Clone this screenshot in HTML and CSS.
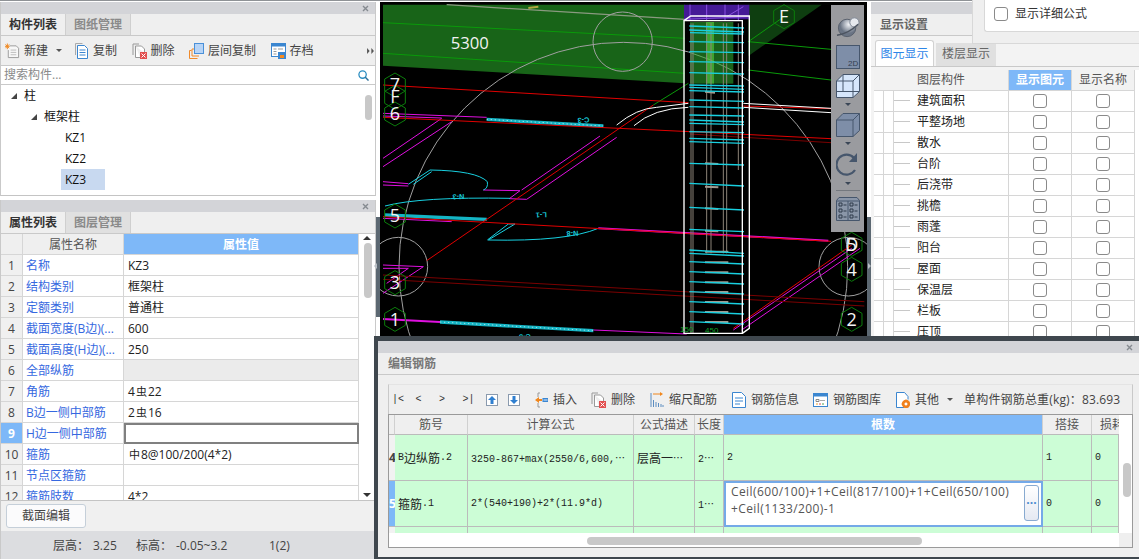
FILE: index.html
```html
<!DOCTYPE html>
<html lang="zh">
<head>
<meta charset="utf-8">
<title>编辑钢筋</title>
<link rel="stylesheet" href="styles.css">
</head>
<body>
<div class="app">
  <div class="topline"></div>
  <div class="main">
    <div class="left">
      <section class="panel list-panel">
        <div class="titlebar"><svg class="close" viewBox="0 0 7 7"><path d="M1 1l5 5M6 1L1 6"/></svg></div>
        <div class="tabs">
          <div class="tab on">构件列表</div>
          <div class="tab">图纸管理</div>
        </div>
        <div class="toolbar">
          <div class="tool tool-new"><svg class="ic" viewBox="0 0 16 16"><path d="M5 2.5h7l2.5 2.5v10h-11V7" fill="#f7f7f7" stroke="#999"/><path d="M6 7h6M6 9.5h6M6 12h6" stroke="#bbb"/><path d="M.5 1l4 4M4.5 1l-4 4M2.5 0v6M0 3h5" stroke="#f0861c"/></svg>新建<span class="caret"></span></div>
          <div class="tool"><svg class="ic" viewBox="0 0 15 16"><path d="M1.5 12V.5h7" fill="none" stroke="#aaa"/><path d="M3.5 2.5h7l3 3v10h-10z" fill="#fff" stroke="#3b86d0"/><path d="M5.500 7h6M5.500 9.500h6M5.500 12h6" stroke="#3b86d0"/></svg>复制</div>
          <div class="tool"><svg class="ic" viewBox="0 0 15 16"><path d="M1 12V1h6" fill="none" stroke="#999"/><path d="M3.500 3h6l3 3v4M8 14.500H3.500V3" fill="#fff" stroke="#999"/><rect x="8" y="9" width="7" height="7" fill="#e25050"/><path d="M9.500 10.500l4 4M13.500 10.500l-4 4" stroke="#fff"/></svg>删除</div>
          <div class="tool"><svg class="ic" viewBox="0 0 15 16"><path d="M.5 15.500v-8h2M.5 15.500h8M3 13v-7h2M3 13h7" fill="none" stroke="#f08a2a"/><rect x="5.500" y=".5" width="9" height="10" fill="#b7d4f6" stroke="#4a90d8"/></svg>层间复制</div>
          <div class="tool"><svg class="ic" viewBox="0 0 15 16"><rect x=".5" y=".5" width="14" height="13" fill="#fff" stroke="#3b86d0"/><rect x=".5" y=".5" width="14" height="3" fill="#3b86d0"/><path d="M2.500 6h3M2.500 8.500h3M2.500 11h3M7 6h5" stroke="#999"/><rect x="7" y="9" width="8" height="7" fill="#3b86d0"/><rect x="9" y="12" width="4" height="3" fill="#f58a1f"/></svg>存档</div>
          <svg class="more" viewBox="0 0 8 7"><path d="M0 0l3 3.500L0 7zM5 0l3 3.500L5 7z"/></svg>
        </div>
        <div class="search">
          <span class="placeholder">搜索构件...</span>
          <svg class="search-ic" viewBox="0 0 12 12"><circle cx="5" cy="5" r="4" fill="none" stroke="#2a8cc0" stroke-width="1.400"/><path d="M8 8l3.500 3.500" stroke="#2a6f9a" stroke-width="1.600"/></svg>
        </div>
        <div class="tree">
          <div class="node lv1"><i class="tri"></i>柱</div>
          <div class="node lv2"><i class="tri"></i>框架柱</div>
          <div class="node lv3"><span>KZ1</span></div>
          <div class="node lv3"><span>KZ2</span></div>
          <div class="node lv3"><span class="sel">KZ3</span></div>
          <div class="thumb tree-thumb"></div>
        </div>
      </section>
      <section class="panel prop-panel">
        <div class="titlebar"><svg class="close" viewBox="0 0 7 7"><path d="M1 1l5 5M6 1L1 6"/></svg></div>
        <div class="tabs">
          <div class="tab on">属性列表</div>
          <div class="tab">图层管理</div>
        </div>
        <div class="prop-wrap">
          <div class="props">
            <div class="prow head"><div class="pi"></div><div class="pn">属性名称</div><div class="pv">属性值</div></div>
            <div class="prow"><div class="pi">1</div><div class="pn">名称</div><div class="pv">KZ3</div></div>
            <div class="prow"><div class="pi">2</div><div class="pn">结构类别</div><div class="pv">框架柱</div></div>
            <div class="prow"><div class="pi">3</div><div class="pn">定额类别</div><div class="pv">普通柱</div></div>
            <div class="prow"><div class="pi">4</div><div class="pn">截面宽度(B边)(...</div><div class="pv">600</div></div>
            <div class="prow"><div class="pi">5</div><div class="pn">截面高度(H边)(...</div><div class="pv">250</div></div>
            <div class="prow"><div class="pi">6</div><div class="pn">全部纵筋</div><div class="pv grey"></div></div>
            <div class="prow"><div class="pi">7</div><div class="pn">角筋</div><div class="pv">4<span class="rb">虫</span>22</div></div>
            <div class="prow"><div class="pi">8</div><div class="pn">B边一侧中部筋</div><div class="pv">2<span class="rb">虫</span>16</div></div>
            <div class="prow"><div class="pi cur">9</div><div class="pn">H边一侧中部筋</div><div class="pv edit"></div></div>
            <div class="prow"><div class="pi">10</div><div class="pn">箍筋</div><div class="pv"><span class="rb">中</span>8@100/200(4*2)</div></div>
            <div class="prow"><div class="pi">11</div><div class="pn">节点区箍筋</div><div class="pv"></div></div>
            <div class="prow"><div class="pi">12</div><div class="pn">箍筋肢数</div><div class="pv">4*2</div></div>
          </div>
          <div class="vscroll">
            <i class="arrow up"></i>
            <div class="thumb prop-thumb"></div>
            <i class="arrow down"></i>
          </div>
        </div>
        <div class="btn-area"><button class="btn">截面编辑</button></div>
        <div class="status">
          <span class="s1">层高：</span><span class="s2">3.25</span><span class="s3">标高：</span><span class="s4">-0.05~3.2</span><span class="s5">1(2)</span>
        </div>
      </section>
    </div>
    <div class="split"><div class="grip"><i class="grip-l"></i></div></div>
    <div class="canvas">
      <svg class="scene" viewBox="0 6 1461 1002" preserveAspectRatio="xMinYMin slice">
        <defs>
          <polygon id="hx" points="0,-36 31,-18 31,18 0,36 -31,18 -31,-18" fill="none" stroke="#0c7d0c" stroke-width="3"/>
        </defs>
        <rect x="0" y="0" width="1470" height="1020" fill="#000"/>
        <polygon points="9,14 915,14 915,250 9,197" fill="#186418"/>
        <polygon points="1105,14 1325,14 1105,168" fill="#0e3e10"/>
        <g fill="none" stroke="#0a9a0a" stroke-width="3">
          <path d="M9 68L915 115M9 160L915 220M1105 125L1353 148M1105 210L1353 240M1105 125L1212 50M820 315L925 250"/>
        </g>
        <path d="M200 14L915 58" stroke="#8a9a80" stroke-width="4"/>
        <path d="M445 24L475 20" stroke="#b0a840" stroke-width="6"/>
        <g fill="none" stroke="#a0a0a0" stroke-width="3">
          <circle cx="728" cy="125" r="89"/>
          <circle cx="730" cy="800" r="673"/>
          <circle cx="55" cy="800" r="88"/>
          <circle cx="1405" cy="800" r="88"/>
        </g>
        <g fill="none" stroke="#e010e0" stroke-width="3">
          <path d="M9 340L320 352M9 348L185 354M9 475L185 355M9 500L215 365M425 570L660 408M440 598L710 412M9 545L85 551M9 555L85 558M310 570L420 572L388 596L440 598M9 795L130 800L9 880M9 805L85 805L20 850M9 655L215 665M640 990L920 1002M1060 990L1415 745M1085 990L1440 745"/>
          <path d="M655 685L1345 722M9 957L180 966" stroke-width="6"/>
        </g>
        <g fill="none" stroke="#18d0e0" stroke-width="3">
          <path d="M85 553L150 510Q290 512 322 545Q325 565 310 570M100 553L155 515M15 618Q120 590 390 595M325 720L405 672L385 672L322 720M325 720Q560 725 655 685"/>
          <path d="M320 358L670 378M15 645L320 658M180 966L640 992" stroke="#14b4c4" stroke-width="10"/>
          <path d="M320 358L670 378M180 966L640 992" stroke="#e6f8fa" stroke-width="2" stroke-dasharray="4 8"/>
        </g>
        <g fill="none" stroke="#e00000" stroke-width="3">
          <path d="M9 255L925 308M140 782L820 315M9 352L930 395L1353 416M9 650L1353 724M1090 318L1353 326M1060 985L1415 735"/>
        </g>
        <g fill="none" stroke="#7a0000" stroke-width="3">
          <path d="M9 825L1453 905M9 838L1453 918M930 402L1353 428"/>
        </g>
        <g fill="none" stroke="#fff" stroke-width="3">
          <path d="M710 375Q770 325 830 322L925 310M762 377Q820 325 925 322M1090 310L1353 325M1090 322L1353 338"/>
        </g>
        <polygon points="912,14 1108,14 1108,58 912,60" fill="#451a96"/>
        <g fill="none" stroke="#8a50e0" stroke-width="3"><path d="M930 14V60M980 14V60M1035 14V60M1075 14V60M912 58L1108 50M1040 50L1090 20"/></g>
        <rect x="930" y="66" width="130" height="185" fill="#2fb030" opacity=".55"/>
        <rect x="978" y="66" width="24" height="185" fill="#58d040" opacity=".6"/>
        <g fill="none" stroke="#8c8478" stroke-width="3">
          <path d="M933 70V1000M939 70V1000M980 70V760M993 70V760M1030 70V760M1040 70V760M1075 70V510"/>
        </g>
        <g fill="none" stroke="#a09a90" stroke-width="6">
          <path d="M975 275L1005 278M975 490L1015 492M975 560L1015 562M975 625L1015 627M975 692L1015 694M975 755L1045 755M975 787L1045 787M975 817L1045 817M975 847L1045 847M975 876L1045 876M975 906L1045 906M975 936L1045 936M975 966L1045 966"/>
        </g>
        <g fill="none" stroke="#18d0e0" stroke-width="4">
          <path d="M928 78L1092 84M930 98L1090 102M928 125L1092 128M928 155L1092 158M928 185L1092 188M928 218L1092 222M928 255L1092 258M928 272L1092 276M928 300L1092 304M928 320L1092 324M928 345L1092 348M928 370L1092 374M928 395L1092 398M928 425L1092 430M928 490L1092 495M928 550L1092 558M928 622L1092 630M928 688L1092 695M928 750L1092 760M928 785L1092 792M928 815L1092 822M928 845L1092 852M928 875L1092 882M928 905L1092 912M928 935L1092 942M928 965L1092 972"/>
          <path d="M928 90L1092 96M928 262L1092 268M928 360L1092 366M928 415L1092 420M928 760L1092 768"/>
        </g>
        <g fill="none" stroke="#fff" stroke-width="4">
          <path d="M912 62H1087V1000H912ZM912 62L932 48H1108V985L1087 1000"/>
        </g>
        <g class="cad-note">
          <text transform="translate(628 352) rotate(177)">C-3</text>
          <text transform="translate(253 582) rotate(178)">N-3</text>
          <text transform="translate(500 637) rotate(178)">L-1</text>
          <text transform="translate(595 692) rotate(178)">N-8</text>
          <text transform="translate(452 1002) rotate(178)">C-3</text>
        </g>
        <text class="cad-green" x="900" y="996">150</text>
        <text class="cad-green" x="975" y="1000">450</text>
        <use href="#hx" x="1212" y="50"/>
        <use href="#hx" x="45" y="255"/>
        <use href="#hx" x="45" y="292"/>
        <use href="#hx" x="45" y="342"/>
        <use href="#hx" x="45" y="648"/>
        <use href="#hx" x="45" y="848"/>
        <use href="#hx" x="45" y="958"/>
        <use href="#hx" x="1415" y="733"/>
        <use href="#hx" x="1415" y="808"/>
        <use href="#hx" x="1415" y="958"/>
        <g class="cad-label">
          <text x="1212" y="69">E</text>
          <text x="45" y="272">7</text>
          <text x="45" y="309">F</text>
          <text x="45" y="359">6</text>
          <text x="45" y="667">5</text>
          <text x="45" y="867">3</text>
          <text x="45" y="977">1</text>
          <text x="1415" y="752">D</text>
          <text x="1415" y="752">5</text>
          <text x="1415" y="827">4</text>
          <text x="1415" y="977">2</text>
        </g>
        <text class="cad-big" x="212" y="148">5300</text>
      </svg>
      <div class="viewbar">
        <svg class="vb-sphere" viewBox="0 0 26 24"><defs><radialGradient id="sp" cx=".6" cy=".3"><stop offset="0" stop-color="#f2f4f8"/><stop offset="1" stop-color="#6a7484"/></radialGradient></defs><circle cx="12" cy="13" r="9.500" fill="url(#sp)" stroke="#555d6a"/><circle cx="20" cy="7" r="5" fill="#e6e9ee" stroke="#7a8290"/><path d="M1 21Q14 19 24 9" fill="none" stroke="#4c5460" stroke-width="1.500"/></svg>
        <svg class="vb-ic" viewBox="0 0 24 24"><rect x=".5" y=".5" width="23" height="23" fill="#7e8ea8" stroke="#46566c"/><text class="vb-2d" x="12" y="21">2D</text></svg>
        <svg class="vb-ic vb-next" viewBox="0 0 24 24"><path d="M.5 7L7 .5h16.500v17L17 23.500H.5z" fill="#d6e6fb" stroke="#46566c"/><path d="M.5 7H17v16.500M17 7l6.500-6.500M7 .5v17H.5M7 17.500h16.500" fill="none" stroke="#46566c"/></svg>
        <i class="vb-caret"></i>
        <svg class="vb-ic" viewBox="0 0 24 24"><path d="M.5 7L7 .5h16.500v17L17 23.500H.5z" fill="#7e8ea8" stroke="#46566c"/><path d="M.5 7H17v16.500M17 7l6.500-6.500" fill="none" stroke="#46566c"/></svg>
        <i class="vb-caret vb-caret-b"></i>
        <svg class="vb-ic" viewBox="0 0 24 24"><path d="M19 17A10 10 0 1 1 18 5" fill="none" stroke="#46566c" stroke-width="2.200"/><path d="M21 0v9h-8z" fill="#46566c"/></svg>
        <i class="vb-caret vb-caret-c"></i>
        <div class="vb-sep"></div>
        <svg class="vb-ic" viewBox="0 0 24 24"><path d="M3 .5h18l2.500 3v20H.5v-20z" fill="#8a96a8" stroke="#46566c"/><path d="M.5 4h23M12 4v19.500" stroke="#46566c"/><path d="M3 6h3v3H3zM3 12h3v3H3zM3 18h3v3H3zM14 6h3v3h-3zM14 12h3v3h-3zM14 18h3v3h-3z" fill="none" stroke="#2e3a4a"/><path d="M7.500 8h3M7.500 14h3M7.500 20h3M18.500 8h3M18.500 14h3M18.500 20h3" stroke="#2e3a4a"/></svg>
      </div>
    </div>
    <div class="split split-r"><div class="grip"><i class="grip-r"></i></div></div>
    <section class="right">
      <div class="titlebar"></div>
      <div class="r-head">显示设置</div>
      <div class="r-tabs">
        <div class="r-tab on">图元显示</div>
        <div class="r-tab">楼层显示</div>
      </div>
      <div class="layers">
        <div class="lrow lhead"><div class="lc1 lcenter">图层构件</div><div class="lc2 lblue">显示图元</div><div class="lc2">显示名称</div></div>
        <div class="lrow"><div class="lc1"><i class="g1"></i><i class="g2"></i><i class="dash"></i>建筑面积</div><div class="lc2"><i class="chk"></i></div><div class="lc2"><i class="chk"></i></div></div>
        <div class="lrow"><div class="lc1"><i class="g1"></i><i class="g2"></i><i class="dash"></i>平整场地</div><div class="lc2"><i class="chk"></i></div><div class="lc2"><i class="chk"></i></div></div>
        <div class="lrow"><div class="lc1"><i class="g1"></i><i class="g2"></i><i class="dash"></i>散水</div><div class="lc2"><i class="chk"></i></div><div class="lc2"><i class="chk"></i></div></div>
        <div class="lrow"><div class="lc1"><i class="g1"></i><i class="g2"></i><i class="dash"></i>台阶</div><div class="lc2"><i class="chk"></i></div><div class="lc2"><i class="chk"></i></div></div>
        <div class="lrow"><div class="lc1"><i class="g1"></i><i class="g2"></i><i class="dash"></i>后浇带</div><div class="lc2"><i class="chk"></i></div><div class="lc2"><i class="chk"></i></div></div>
        <div class="lrow"><div class="lc1"><i class="g1"></i><i class="g2"></i><i class="dash"></i>挑檐</div><div class="lc2"><i class="chk"></i></div><div class="lc2"><i class="chk"></i></div></div>
        <div class="lrow"><div class="lc1"><i class="g1"></i><i class="g2"></i><i class="dash"></i>雨蓬</div><div class="lc2"><i class="chk"></i></div><div class="lc2"><i class="chk"></i></div></div>
        <div class="lrow"><div class="lc1"><i class="g1"></i><i class="g2"></i><i class="dash"></i>阳台</div><div class="lc2"><i class="chk"></i></div><div class="lc2"><i class="chk"></i></div></div>
        <div class="lrow"><div class="lc1"><i class="g1"></i><i class="g2"></i><i class="dash"></i>屋面</div><div class="lc2"><i class="chk"></i></div><div class="lc2"><i class="chk"></i></div></div>
        <div class="lrow"><div class="lc1"><i class="g1"></i><i class="g2"></i><i class="dash"></i>保温层</div><div class="lc2"><i class="chk"></i></div><div class="lc2"><i class="chk"></i></div></div>
        <div class="lrow"><div class="lc1"><i class="g1"></i><i class="g2"></i><i class="dash"></i>栏板</div><div class="lc2"><i class="chk"></i></div><div class="lc2"><i class="chk"></i></div></div>
        <div class="lrow"><div class="lc1"><i class="g1"></i><i class="g2"></i><i class="dash"></i>压顶</div><div class="lc2"><i class="chk"></i></div><div class="lc2"><i class="chk"></i></div></div>
      </div>
    </section>
  </div>

  <div class="popup">
    <div class="popup-inner"><i class="chk"></i><span>显示详细公式</span></div>
  </div>

  <section class="rebar-win">
    <div class="titlebar"><svg class="close" viewBox="0 0 7 7"><path d="M1 1l5 5M6 1L1 6"/></svg></div>
    <div class="win-head">编辑钢筋</div>
    <div class="win-body">
      <div class="win-tools">
        <div class="nav"><span>|&lt;</span><span>&lt;</span><span>&gt;</span><span>&gt;|</span></div>
        <svg class="mv" viewBox="0 0 12 12"><rect width="12" height="12" fill="#8a9aae"/><rect x="1" y="1" width="10" height="10" fill="#fff"/><path d="M6 2l4 4H7.500v4h-3V6H2z" fill="#2f7fd0"/></svg>
        <svg class="mv mv2" viewBox="0 0 12 12"><rect width="12" height="12" fill="#8a9aae"/><rect x="1" y="1" width="10" height="10" fill="#fff"/><path d="M6 10L2 6h2.500V2h3v4H10z" fill="#2f7fd0"/></svg>
        <div class="tool m14 first"><svg class="ic13" viewBox="0 0 13 16"><path d="M5 1h-2v4M3 11v4h2" fill="none" stroke="#999"/><path d="M0 8l4-3v2h3v2H4v2z" fill="#f0861c"/><rect x="8" y="6.500" width="5" height="3" fill="#8ab8e8" stroke="#3b86d0"/></svg>插入</div>
        <div class="tool"><svg class="ic15" viewBox="0 0 15 16"><path d="M1 12V1h6" fill="none" stroke="#999"/><path d="M3.500 3h6l3 3v4M8 14.500H3.500V3" fill="#fff" stroke="#999"/><rect x="8" y="9" width="7" height="7" fill="#e25050"/><path d="M9.500 10.500l4 4M13.500 10.500l-4 4" stroke="#fff"/></svg>删除</div>
        <div class="tool"><svg class="ic14" viewBox="0 0 14 16"><path d="M1 1v14M3.500 8v7M6 10v5M8.500 11v4M11 12v3M13 13v2" stroke="#5a8cc0"/><path d="M3 2h8" stroke="#f0861c"/><path d="M10 0l3 2-3 2z" fill="#f0861c"/></svg>缩尺配筋</div>
        <div class="tool m14"><svg class="ic14" viewBox="0 0 14 16"><path d="M.5.5h9l4 4v11H.5z" fill="#fff" stroke="#3b86d0"/><path d="M3 6h8M3 9h8M3 12h5" stroke="#3b86d0"/></svg>钢筋信息</div>
        <div class="tool"><svg class="ic15" viewBox="0 0 15 14"><rect x=".5" y=".5" width="14" height="13" fill="#fff" stroke="#3b86d0"/><rect x=".5" y=".5" width="14" height="3" fill="#3b86d0"/><path d="M3 6.500h3v2H3z" fill="none" stroke="#888"/><path d="M3 11h2" stroke="#f0a030"/><path d="M6 11h2" stroke="#e05050"/><path d="M9 11h2" stroke="#50a050"/><path d="M7 7.500h5" stroke="#aaa"/></svg>钢筋图库</div>
        <div class="tool"><svg class="ic14" viewBox="0 0 14 16"><path d="M8 15.500H.5V.5h8l3.500 4v3" fill="#fff" stroke="#3b86d0"/><circle cx="10" cy="12" r="3" fill="none" stroke="#f0801c" stroke-width="2.400"/><path d="M10 7.500v9M5.500 12h9M7 9l6 6M13 9l-6 6" stroke="#f0801c"/><circle cx="10" cy="12" r="1.200" fill="#fff"/></svg>其他<span class="caret"></span></div>
        <div class="total">单构件钢筋总重(kg)：83.693</div>
      </div>
      <div class="rb-frame">
        <div class="rb-main">
          <div class="rb-clip">
            <div class="rrow rhead"><div class="rc"></div><div class="rc">筋号</div><div class="rc">计算公式</div><div class="rc">公式描述</div><div class="rc">长度</div><div class="rc act">根数</div><div class="rc">搭接</div><div class="rc clip-name">损耗</div></div>
            <div class="rrow rbody"><div class="rc ridx">4</div><div class="rc mono">B<span class="cj">边纵筋</span>.2</div><div class="rc mono">3250-867+max(2550/6,600,⋯</div><div class="rc mono"><span class="cj">层高一</span>⋯</div><div class="rc mono">2⋯</div><div class="rc mono">2</div><div class="rc mono">1</div><div class="rc mono">0</div></div>
            <div class="rrow rbody"><div class="rc ridx cur">5</div><div class="rc mono"><span class="cj">箍筋</span>.1</div><div class="rc mono">2*(540+190)+2*(11.9*d)</div><div class="rc mono"></div><div class="rc mono">1⋯</div><div class="rc cell-edit"><div class="formula">Ceil(600/100)+1+Ceil(817/100)+1+Ceil(650/100)<br>+Ceil(1133/200)-1</div><button class="dots">···</button></div><div class="rc mono">0</div><div class="rc mono">0</div></div>
            <div class="rrow rbody"><div class="rc ridx"></div><div class="rc"></div><div class="rc"></div><div class="rc"></div><div class="rc"></div><div class="rc"></div><div class="rc"></div><div class="rc"></div></div>
          </div>
          <div class="hscroll"><div class="thumb h-thumb"></div></div>
        </div>
        <div class="rb-side">
          <div class="thumb v-thumb"></div>
          <div class="corner"></div>
        </div>
      </div>
    </div>
  </section>
</div>
</body>
</html>
```

FILE: styles.css
```css
* { box-sizing: border-box; }
html, body { margin: 0; padding: 0; }
body {
  width: 1139px;
  height: 559px;
  overflow: hidden;
  font: 12px/1 "Open Sans", "Noto Sans CJK SC", sans-serif;
  color: #222;
  background: #fff;
}
i { display: block; font-style: normal; }
button { font: inherit; padding: 0; cursor: default; }

.app { position: relative; width: 1139px; height: 559px; overflow: hidden; }
.topline { height: 2px; background: #fff; border-top: 1px solid #8f9296; }
.main { display: flex; height: 557px; }

/* shared */
.titlebar { position: relative; height: 12px; background: #d3d4d8; flex: none; }
.close { position: absolute; right: 6px; top: 3px; width: 7px; height: 7px; }
.close path { stroke: #858a90; stroke-width: 1.400; fill: none; }
.thumb { background: #c8c8c8; border-radius: 4px; }

/* left column */
.left { width: 376px; flex: none; display: flex; flex-direction: column; gap: 4px; }
.panel { display: flex; flex-direction: column; background: #fff; border-left: 1px solid #c9c9c9; border-right: 1px solid #c9c9c9; }
.list-panel { height: 194px; border-bottom: 1px solid #c4c4c4; }
.prop-panel { height: 359px; }
.tabs { display: flex; height: 22px; flex: none; background: #efefef; border-bottom: 1px solid #c9c9c9; }
.tab { width: 65px; line-height: 21px; text-align: center; font-weight: 700; color: #8a8a8a; background: #e0e0e0; border-right: 1px solid #cfcfcf; }
.tab.on { color: #333; background: #efefef; }

.toolbar { display: flex; align-items: center; height: 30px; padding-left: 4px; flex: none; background: #efefef; border-bottom: 1px solid #c9c9c9; color: #444; }
.tool { display: flex; align-items: center; margin-right: 15px; color: #444; }
.toolbar .tool { margin-right: 14.500px; }
.toolbar .tool-new { margin-right: 12px; }
.ic { width: 15px; height: 16px; margin-right: 4px; flex: none; }
.ic13 { width: 13px; height: 16px; margin-right: 5px; flex: none; }
.ic14 { width: 14px; height: 16px; margin-right: 5px; flex: none; }
.ic15 { width: 15px; height: 16px; margin-right: 5px; flex: none; }
.caret { width: 0; height: 0; margin-left: 8px; border: 3px solid transparent; border-top: 3px solid #555; border-bottom: 0; }
.more { width: 7px; height: 6px; margin-left: auto; margin-right: 1px; }
.more path { fill: #555; }

.search { display: flex; align-items: center; justify-content: space-between; height: 19px; flex: none; padding: 0 6px 0 3px; border-bottom: 1px solid #c9c9c9; }
.placeholder { color: #8a8a8a; }
.search-ic { width: 11px; height: 11px; }

.tree { position: relative; flex: 1; overflow: hidden; }
.node { display: flex; align-items: center; height: 21px; color: #111; }
.lv1 { padding-left: 10px; }
.lv2 { padding-left: 30px; }
.lv3 { padding-left: 60px; }
.lv3 span { display: block; padding: 0 4px; line-height: 21px; }
.lv3 .sel { width: 44px; background: #c8d9f0; }
.tri { width: 0; height: 0; margin-right: 7px; border-style: solid; border-width: 0 0 6px 6px; border-color: transparent transparent #444 transparent; }
.tree-thumb { position: absolute; right: 3px; top: 10px; width: 7px; height: 25px; }

.prop-wrap { display: flex; height: 267px; flex: none; border-bottom: 1px solid #c4c4c4; }
.props { width: 358px; height: 266px; overflow: hidden; flex: none; }
.prow { display: grid; grid-template-columns: 22px 101px 235px; height: 21px; }
.prow > div { display: flex; align-items: center; padding-top: 2px; border-right: 1px solid #d6d6d6; border-bottom: 1px solid #d6d6d6; white-space: nowrap; overflow: hidden; }
.pi { justify-content: center; background: #f0f0f0; color: #444; font-size: 12px; }
.pn { padding-left: 3px; color: #3568e0; }
.pv { padding-left: 4px; color: #222; }
.pv.grey { background: #ebebeb; }
.pv.edit { border: 2px solid #808080 !important; }
.pi.cur { background: #7db8f8; color: #fff; font-weight: 700; }
.rb { font-size: 11px; margin: 0 1px; position: relative; top: -1px; }
.head .pi { background: #efefef; }
.head .pn { justify-content: center; padding-left: 0; background: #efefef; color: #555; }
.head .pv { justify-content: center; padding-left: 0; background: #7eb8f8; color: #fff; font-weight: 700; }
.vscroll { position: relative; flex: 1; }
.arrow { position: absolute; left: 4px; width: 0; height: 0; border: 4px solid transparent; }
.arrow.up { top: 2px; border-top: 0; border-bottom: 4px solid #333; }
.arrow.down { bottom: 3px; border-bottom: 0; border-top: 4px solid #333; }
.prop-thumb { position: absolute; left: 5px; top: 9px; width: 8px; height: 55px; }

.btn-area { height: 30px; flex: none; padding: 3px 5px; background: #f0f0f0; }
.btn { width: 80px; height: 24px; background: #fbfbfc; border: 1px solid #c5cfd9; border-radius: 3px; color: #444; }
.status { display: flex; align-items: center; height: 29px; flex: none; background: #dcdde0; color: #444; }
.status .s1 { margin-left: 52px; width: 40px; }
.status .s2 { width: 43px; }
.status .s3 { width: 40px; }
.status .s4 { width: 93px; }

/* splitters */
.split { width: 4px; flex: none; position: relative; background: #fff; }
.grip { position: absolute; left: 0; right: 0; top: 215px; height: 100px; background: #5c6872; }
.split-r .grip { height: 120px; }
.grip-l, .grip-r { position: absolute; top: 46px; width: 0; height: 0; border: 3px solid transparent; }
.grip-l { left: -2px; border-right: 3px solid #b8bec4; border-left: 0; }
.grip-r { left: 1px; border-left: 3px solid #b8bec4; border-right: 0; }

/* canvas */
.canvas { position: relative; width: 487px; flex: none; background: #000; overflow: hidden; }
.scene { display: block; width: 487px; height: 334px; }
.cad-note text { font: 700 22px "Liberation Sans", sans-serif; fill: #18c8d8; }
.cad-green { font: 24px "Liberation Sans", sans-serif; fill: #0fa02a; }
.cad-label text { font: 54px "Open Sans", sans-serif; fill: #f4f4f4; text-anchor: middle; }
.cad-big { font: 50px "Open Sans", sans-serif; fill: #f2f2f2; }

.viewbar { position: absolute; left: 451px; top: 3px; width: 33px; height: 227px; display: flex; flex-direction: column; align-items: center; padding-top: 11px; background: #9a9b9f; }
.vb-sphere { width: 26px; height: 22px; margin-bottom: 7px; flex: none; }
.vb-ic { width: 24px; height: 24px; flex: none; }
.vb-next { margin-top: 5px; }
.vb-2d { font: 8px "Liberation Sans", sans-serif; fill: #33404f; }
.vb-caret { width: 0; height: 0; margin: 5px 0 7px; border: 3px solid transparent; border-top: 3px solid #3a4656; border-bottom: 0; flex: none; }
.vb-caret-b { margin-bottom: 8px; }
.vb-caret-c { margin-bottom: 5px; }
.vb-sep { width: 24px; height: 1px; margin-bottom: 6px; background: #74787e; flex: none; }

/* right */
.right { flex: 1; min-width: 0; height: 557px; overflow: hidden; background: #fff; }
.r-head { height: 22px; padding-left: 9px; line-height: 21px; font-weight: 700; color: #666; background: #efefef; border-bottom: 1px solid #c9c9c9; }
.r-tabs { display: flex; align-items: flex-end; height: 31px; padding-left: 4px; gap: 2px; background: #f3f3f3; border-bottom: 1px solid #c9c9c9; }
.r-tab { height: 23px; width: 60px; line-height: 22px; text-align: center; color: #666; background: #e0e0e0; }
.r-tab.on { width: 59px; height: 26px; line-height: 25px; color: #2d86e8; background: #fff; border: 1px solid #d2d2d2; border-bottom: 0; border-radius: 3px 3px 0 0; }
.layers { padding: 3px 0 0 3px; background: #f3f3f3; }
.lrow { display: grid; grid-template-columns: 135px 63px 63px; height: 21px; background: #fff; }
.lrow > div { display: flex; align-items: center; justify-content: center; border-right: 1px solid #d6d6d6; border-bottom: 1px solid #d6d6d6; color: #222; }
.lrow > .lc1 { justify-content: flex-start; align-items: stretch; line-height: 20px; }
.lhead > div { background: #f2f2f2; color: #555; }
.lrow > .lcenter { justify-content: center; }
.lrow > .lblue { background: #7eb8f8; color: #fff; font-weight: 700; }
.g1 { width: 10px; border-right: 1px solid #d6d6d6; }
.g2 { width: 10px; border-right: 1px solid #d6d6d6; }
.dash { width: 16px; height: 1px; margin: 9px 7px 0 0; background: #c8c8c8; }
.chk { width: 14px; height: 14px; background: #fff; border: 1px solid #8a8a8a; border-radius: 3px; }

/* popup */
.popup { position: absolute; left: 972px; top: 0; width: 167px; height: 44px; padding-left: 11px; background: #efefef; border: 1px solid #d8d8d8; border-top: 0; border-right: 0; }
.popup-inner { display: flex; align-items: center; gap: 7px; height: 32px; padding: 0 0 4px 9px; background: #fff; border: 1px solid #d8d8d8; border-top: 0; border-right: 0; border-radius: 0 0 0 3px; color: #333; }

/* rebar window */
.rebar-win { position: absolute; left: 374px; top: 336px; width: 765px; height: 223px; display: flex; flex-direction: column; background: #efefef; border-top: 5px solid #3f474e; border-left: 4px solid #3f474e; border-bottom: 2px solid #3f474e; }
.win-head { height: 22px; padding-left: 10px; line-height: 21px; flex: none; font-weight: 700; color: #777; background: #efefef; border-bottom: 1px solid #c9c9c9; }
.win-body { flex: 1; padding: 9px 6px 10px 10px; }
.win-tools { display: flex; align-items: center; height: 30px; border-left: 1px solid #c9c9c9; border-right: 1px solid #c9c9c9; border-top: 1px solid #e4e4e4; }
.nav { display: flex; width: 97px; padding-left: 3px; font: 10px "Liberation Mono", monospace; color: #333; }
.nav span { width: 24px; }
.mv { width: 12px; height: 12px; flex: none; }
.mv2 { margin-left: 10px; margin-right: 15px; }
.first { margin-left: 0; }
.m14 { margin-right: 14px; }
.total { margin-left: -4px; letter-spacing: .16px; color: #444; white-space: nowrap; }

.rb-frame { display: flex; height: 134px; background: #fff; border: 1px solid #9a9a9a; }
.rb-main { width: 730px; flex: none; }
.rb-clip { height: 118px; overflow: hidden; }
.rrow { display: grid; grid-template-columns: 6px 73px 166px 61px 29px 319px 49px 27px; }
.rhead { height: 20px; }
.rbody { height: 46px; }
.rc { display: flex; align-items: center; overflow: hidden; white-space: nowrap; border-right: 1px solid #bbb; border-bottom: 1px solid #bbb; }
.rhead .rc { justify-content: center; background: #efefef; color: #555; border-color: #d0d0d0; border-bottom-color: #bbb; }
.rhead .rc.act { background: #7eb8f8; color: #fff; font-weight: 700; }
.rhead .clip-name { justify-content: flex-start; padding-left: 8px; border-right: 0; }
.rbody .rc { background: #ccfdd6; padding-left: 3px; }
.rbody .ridx { padding: 0; background: #f2f2f2; font-weight: 700; color: #444; border-right: 0; }
.rbody .ridx.cur { background: #7db8f8; color: #fff; }
.mono { font: 10px "Liberation Mono", "Noto Sans CJK SC", monospace; color: #222; }
.cj { font: 12px "Noto Sans CJK SC", sans-serif; }
.rbody .cell-edit { position: relative; padding: 0; display: block; background: #fff; border: 2px solid #74a9e8; }
.formula { padding: 0 0 0 5px; line-height: 17px; letter-spacing: .4px; color: #555; }
.dots { position: absolute; right: 2px; top: 2px; width: 15px; height: 36px; line-height: 30px; color: #4a8ad0; font-weight: 700; background: linear-gradient(#fff, #e5e9f2); border: 1px solid #88aad0; border-radius: 3px; }
.hscroll { height: 14px; padding: 4px 0 0 198px; }
.h-thumb { width: 335px; height: 8px; }
.rb-side { position: relative; flex: 1; }
.v-thumb { position: absolute; left: 4px; top: 48px; width: 8px; height: 34px; }
.corner { position: absolute; left: 0; right: 0; bottom: 0; height: 14px; background: #efefef; }
```
